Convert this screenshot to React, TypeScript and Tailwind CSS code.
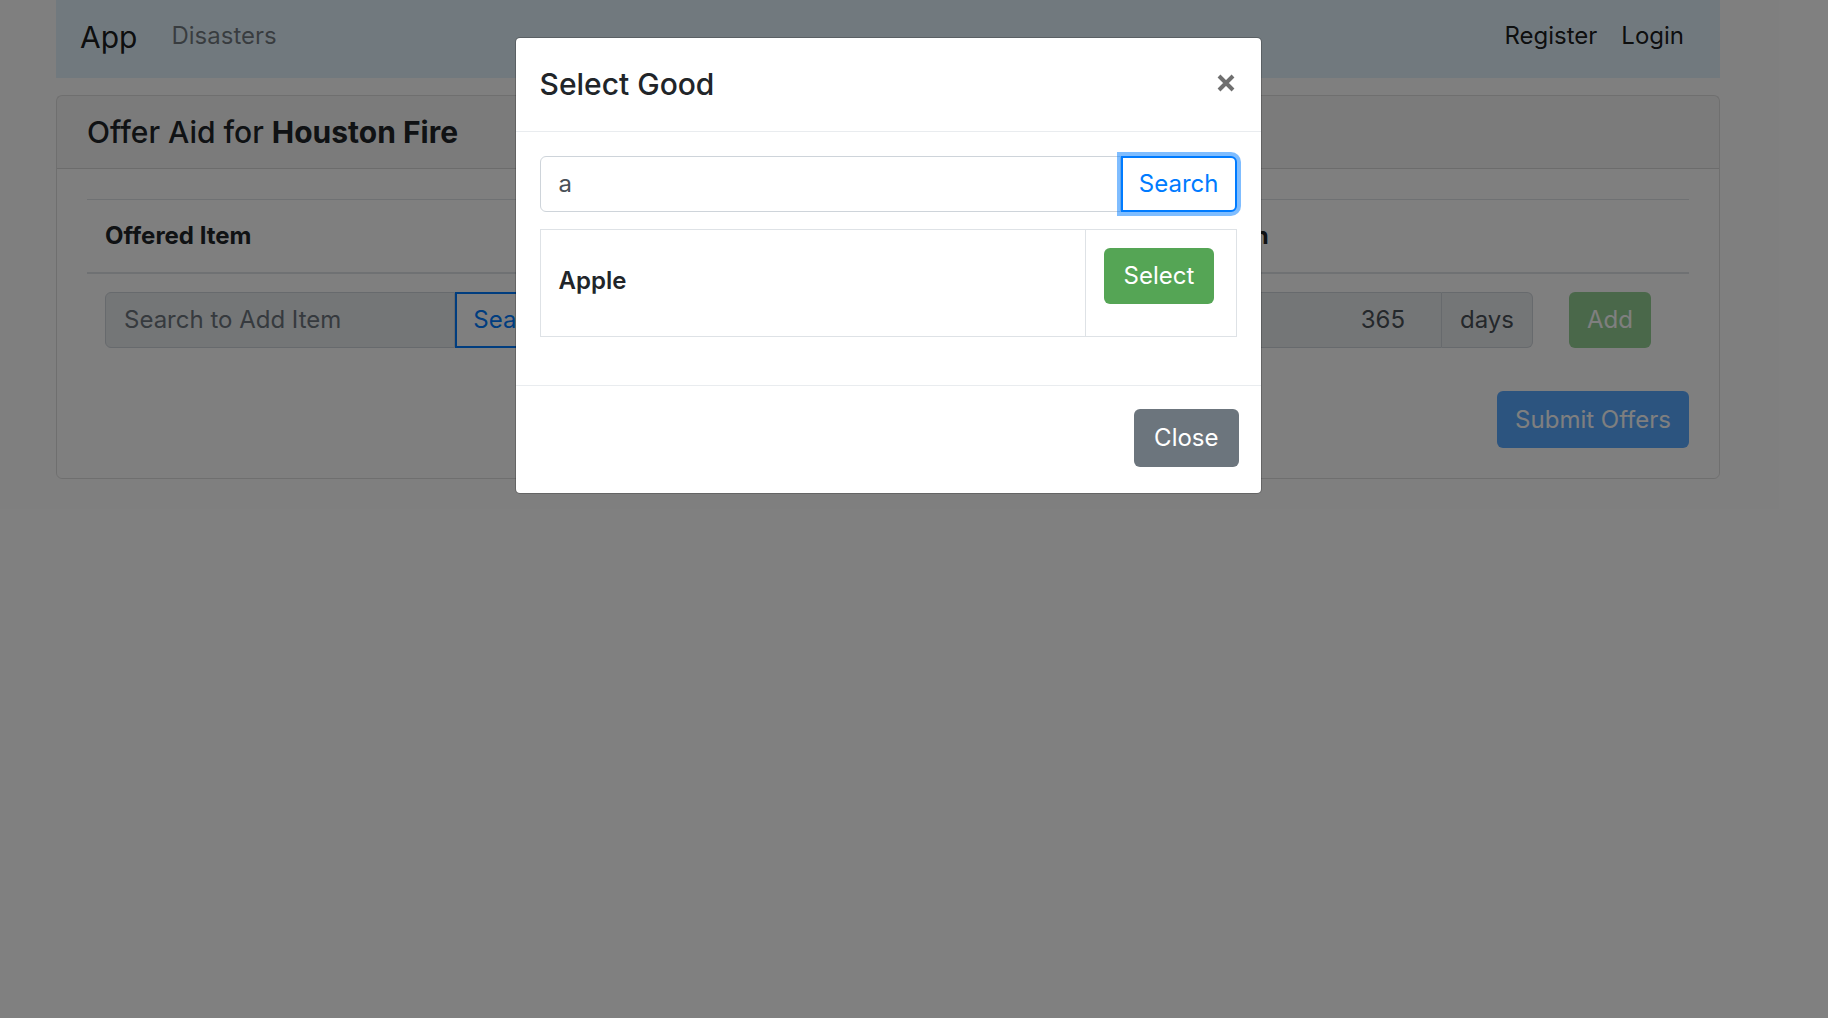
export default function App() {
  return (
    <div className="relative min-h-screen bg-white font-[Inter,'Liberation_Sans',sans-serif] text-[#212529]">
      <div className="w-[1776px] px-[56px]">
        {/* Navbar */}
        <nav className="flex h-[78px] items-center bg-[#e3f2fd] px-[24px]">
          <span className="mr-[22px] mb-[3px] text-[30px] leading-[45px] text-black/90">App</span>
          <a className="mb-[7px] px-[12px] text-[24px] leading-[36px] text-black/50">Disasters</a>
          <div className="mb-[7px] ml-auto flex">
            <a className="px-[12px] text-[24px] leading-[36px] text-black/90">Register</a>
            <a className="px-[12px] text-[24px] leading-[36px] text-black/90">Login</a>
          </div>
        </nav>

        {/* Offer card */}
        <div className="mt-[17px] rounded-[6px] border border-black/[0.125]">
          <div className="border-b border-black/[0.125] bg-black/[0.03] px-[30px] py-[18px]">
            <h5 className="text-[30px] font-medium leading-[36px]">
              Offer Aid for <b className="font-bold">Houston Fire</b>
            </h5>
          </div>
          <div className="p-[30px]">
            <div className="grid grid-cols-[502px_561px_401px_138px]">
              <div className="border-t border-b-2 border-[#dee2e6] p-[18px] text-[24px] font-bold leading-[36px]">Offered Item</div>
              <div className="border-t border-b-2 border-[#dee2e6] p-[18px] text-[24px] font-bold leading-[36px]">Quantity</div>
              <div className="border-t border-b-2 border-[#dee2e6] p-[18px] text-[24px] font-bold leading-[36px]">Duration</div>
              <div className="border-t border-b-2 border-[#dee2e6] p-[18px]" />

              <div className="p-[18px]">
                <div className="flex h-[56px]">
                  <div className="flex flex-1 items-center rounded-l-[6px] border border-[#ced4da] bg-[#e9ecef] px-[18px] text-[24px] text-[#6c757d]">
                    Search to Add Item
                  </div>
                  <button className="rounded-r-[6px] border-2 border-[#007bff] px-[16px] text-[24px] text-[#007bff]">Search</button>
                </div>
              </div>
              <div className="p-[18px]">
                <div className="flex h-[56px] items-center rounded-[6px] border border-[#ced4da] px-[18px] text-[24px] text-[#495057]">1</div>
              </div>
              <div className="p-[18px]">
                <div className="flex h-[56px]">
                  <div className="flex flex-1 items-center justify-end rounded-l-[6px] border border-[#ced4da] bg-[#e9ecef] pr-[36px] pl-[18px] text-[24px] text-[#495057]">
                    365
                  </div>
                  <div className="flex items-center rounded-r-[6px] border border-l-0 border-[#ced4da] bg-[#e9ecef] px-[18px] text-[24px] text-[#495057]">
                    days
                  </div>
                </div>
              </div>
              <div className="p-[18px]">
                <button className="h-[56px] rounded-[6px] bg-[#5cb85c] px-[18px] text-[24px] text-white opacity-65">Add</button>
              </div>
            </div>

            <div className="mt-[25px] flex justify-end">
              <button className="h-[57px] rounded-[6px] bg-[#007bff] px-[18px] text-[24px] text-white opacity-65">Submit Offers</button>
            </div>
          </div>
        </div>
      </div>

      {/* Modal */}
      <div className="absolute inset-0 bg-black/50">
        <div className="flex w-[1776px] justify-center pt-[37px]">
          <div className="w-[747px] rounded-[5px] border border-black/20 bg-white bg-clip-padding">
            <div className="flex items-center justify-between border-b border-[#e9ecef] p-[24px]">
              <h5 className="text-[30px] font-medium leading-[45px]">Select Good</h5>
              <svg width="18" height="18" viewBox="0 0 18 18" className="mr-[2px] -mt-[4px]">
                <path d="M2 2L16 16M16 2L2 16" stroke="#6f6f6f" strokeWidth="4" />
              </svg>
            </div>
            <div className="p-[24px]">
              <div className="flex h-[56px]">
                <div className="flex flex-1 items-center rounded-l-[6px] border border-[#ced4da] px-[18px] text-[24px] text-[#495057]">a</div>
                <button className="rounded-r-[6px] border-2 border-[#007bff] bg-white px-[16px] text-[24px] text-[#007bff] shadow-[0_0_0_4px_rgba(0,123,255,0.5)]">
                  Search
                </button>
              </div>
              <div className="mt-[17px] mb-[24px] flex border border-[#dee2e6]">
                <div className="flex h-[106px] flex-1 items-center border-r border-[#dee2e6] px-[18px] pb-[4px] text-[24px] font-semibold">Apple</div>
                <div className="w-[150px] p-[18px]">
                  <button className="h-[56px] rounded-[6px] bg-[#55a555] px-[20px] text-[24px] text-white">Select</button>
                </div>
              </div>
            </div>
            <div className="flex justify-end border-t border-[#e9ecef] px-[22px] pt-[23px] pb-[26px]">
              <button className="h-[58px] rounded-[6px] bg-[#6c757d] px-[20px] text-[24px] text-white">Close</button>
            </div>
          </div>
        </div>
      </div>
    </div>
  );
}
